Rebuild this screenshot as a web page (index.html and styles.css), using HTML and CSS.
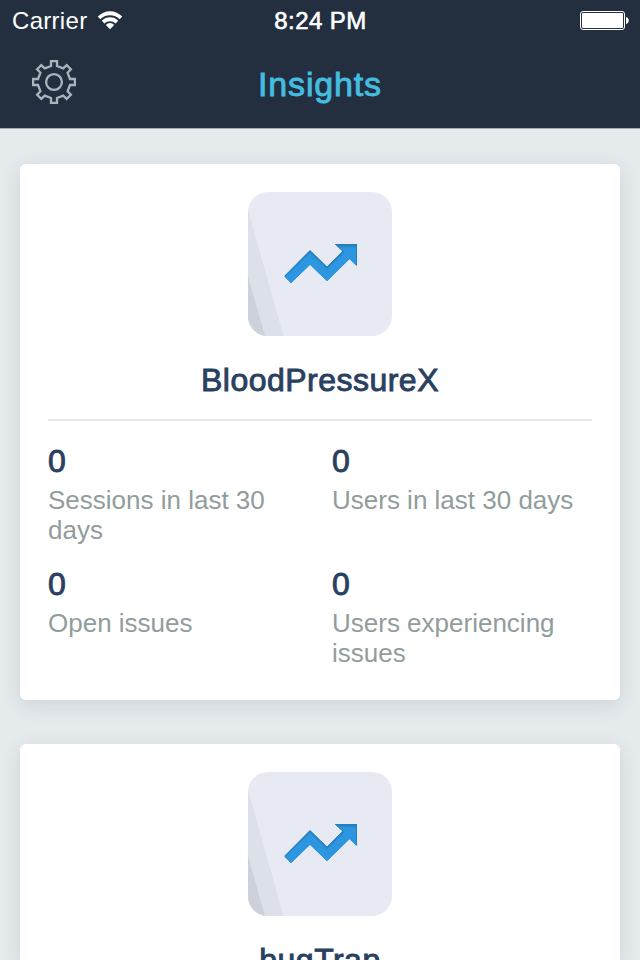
FILE: index.html
```html
<!DOCTYPE html>
<html lang="en">
<head>
<meta charset="utf-8">
<title>Insights</title>
<link rel="stylesheet" href="styles.css">
</head>
<body>
<svg class="defs" width="0" height="0" aria-hidden="true">
  <defs>
    <clipPath id="tile-clip"><rect width="144" height="144" rx="20"/></clipPath>
    <path id="trend" d="M36 84 62 57.7 79 74.3 94 59.3 86.3 52H109V74.3L101.5 67 79 89 62 72.7 43 91Z"/>
    <clipPath id="trend-clip"><use href="#trend"/></clipPath>
    <symbol id="app-icon" viewBox="0 0 144 144">
      <g clip-path="url(#tile-clip)">
        <path fill="#e7eaf2" d="M0 0H144V144H0Z"/>
        <path fill="#dce0e8" d="M0 18 35.5 144H0Z"/>
        <path fill="#cdd1d9" d="M0 84 17 144H0Z"/>
      </g>
      <g clip-path="url(#trend-clip)">
        <use href="#trend" fill="#267fbd"/>
        <path fill="#2b8ace" d="M34 87 62 59.7 79 76.3 96 59.3 90.3 54H108V79L79 95 43 95Z"/>
        <path fill="#2d96e0" d="M34 88.5 62 61.2 79 77.8 96.5 60.3 91.3 55.5H108V79L79 95 43 95Z"/>
      </g>
    </symbol>
  </defs>
</svg>
<header class="header">
  <div class="status">
    <div class="carrier">
      <span>Carrier</span>
      <svg class="wifi" width="26" height="20" viewBox="0 0 26 20" fill="#fff">
        <path d="M.7 5.5A17.2 17.2 0 0 1 25.3 5.5L22.7 8.3A13.6 13.6 0 0 0 3.3 8.3Z"/>
        <path d="M4.8 9.8A11.5 11.5 0 0 1 21.2 9.8L18.6 12.5A7.8 7.8 0 0 0 7.4 12.5Z"/>
        <path d="M8.8 13.9A5.8 5.8 0 0 1 17.2 13.9L13 18.3Z"/>
      </svg>
    </div>
    <div class="time">8:24 PM</div>
    <svg class="battery" width="49" height="19" viewBox="0 0 49 19">
      <rect x=".5" y=".5" width="44" height="18" rx="2.5" fill="none" stroke="#fff"/>
      <rect x="2" y="2" width="41" height="15" rx="1" fill="#fff"/>
      <path d="M46 6C49.7 6.6 49.7 12.4 46 13Z" fill="#fff"/>
    </svg>
  </div>
  <div class="nav">
    <svg class="gear" width="44" height="44" viewBox="-22 -22 44 44" fill="none" stroke="#a9b5bb" stroke-width="2.3">
      <path d="M-3-16V-20.9H3V-16L9.2-13.6 12.7-16.9 16.9-12.7 13.6-9.2 16-3H20.9V3H16L13.6 9.2 16.9 12.7 12.7 16.9 9.2 13.6 3 16V20.9H-3V16L-9.2 13.6-12.7 16.9-16.9 12.7-13.6 9.2-16 3H-20.9V-3H-16L-13.6-9.2-16.9-12.7-12.7-16.9-9.2-13.6Z"/>
      <circle r="7.9"/>
    </svg>
    <h1 class="heading">Insights</h1>
  </div>
</header>
<main class="list">
  <section class="card">
    <svg class="app-icon" width="144" height="144"><use href="#app-icon"/></svg>
    <h2 class="name">BloodPressureX</h2>
    <div class="stats">
      <div class="stat"><div class="value">0</div><div class="label">Sessions in last 30 days</div></div>
      <div class="stat"><div class="value">0</div><div class="label">Users in last 30 days</div></div>
      <div class="stat"><div class="value">0</div><div class="label">Open issues</div></div>
      <div class="stat"><div class="value">0</div><div class="label">Users experiencing issues</div></div>
    </div>
  </section>
  <section class="card">
    <svg class="app-icon" width="144" height="144"><use href="#app-icon"/></svg>
    <h2 class="name">bugTrap</h2>
  </section>
</main>
</body>
</html>
```
FILE: styles.css
```css
* { box-sizing: border-box; }
body {
  margin: 0;
  height: 960px;
  overflow: hidden;
  display: flex;
  flex-direction: column;
  background: #e5eaed;
  font-family: "Liberation Sans", Arial, sans-serif;
}
svg { display: block; }
.defs { position: absolute; }
.header {
  flex: none;
  height: 129px;
  background: #232f3f;
  border-bottom: 1px solid #a5abad;
  color: #fff;
}
.status {
  height: 40px;
  padding: 0 11px 0 12px;
  display: grid;
  grid-template-columns: 1fr auto 1fr;
  align-items: center;
  font-size: 24px;
  line-height: 41px;
}
.carrier {
  display: flex;
  align-items: center;
  gap: 10px;
  letter-spacing: .3px;
}
.time {
  letter-spacing: .45px;
  -webkit-text-stroke: .6px #fff;
}
.battery { justify-self: end; }
.nav {
  height: 88px;
  padding: 0 32px;
  display: grid;
  grid-template-columns: 1fr auto 1fr;
}
.gear { margin-top: 20px; }
.heading {
  margin: 24px 0 0;
  font-size: 34px;
  font-weight: 400;
  line-height: 40px;
  letter-spacing: .85px;
  color: #43bde0;
  -webkit-text-stroke: .9px #43bde0;
}
.list {
  flex: 1;
  min-height: 0;
  overflow: hidden;
  padding: 35px 20px 0;
  display: flex;
  flex-direction: column;
  gap: 44px;
}
.card {
  flex: none;
  height: 536px;
  padding: 28px 28px 32px;
  background: #fff;
  border-radius: 6px;
  box-shadow: 0 5px 20px rgba(35, 55, 65, .12);
}
.card:last-child {
  flex: 1;
  min-height: 0;
  padding-bottom: 0;
  border-radius: 6px 6px 0 0;
}
.app-icon { margin: 0 auto; }
.name {
  margin: 24px 0 19px;
  text-align: center;
  font-size: 32px;
  font-weight: 400;
  line-height: 40px;
  letter-spacing: .48px;
  color: #29405f;
  -webkit-text-stroke: .9px #29405f;
}
.stats {
  border-top: 2px solid #e5e8ea;
  padding-top: 22px;
  display: grid;
  grid-template-columns: 1fr 1fr;
  gap: 21px 24px;
}
.value {
  margin-bottom: 6px;
  font-size: 32px;
  line-height: 36px;
  color: #29405f;
  -webkit-text-stroke: .9px #29405f;
}
.label {
  font-size: 26px;
  line-height: 30px;
  color: #919d9c;
}
```
